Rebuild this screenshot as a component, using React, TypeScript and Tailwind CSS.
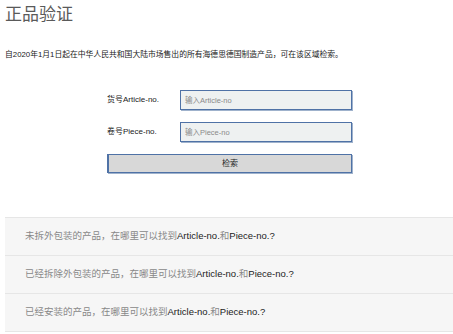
import React from "react";

const questions = [
  "未拆外包装的产品，在哪里可以找到",
  "已经拆除外包装的产品，在哪里可以找到",
  "已经安装的产品，在哪里可以找到",
];

export default function App() {
  return (
    <div
      className="w-[453px] h-[334px] overflow-hidden bg-white"
      style={{ fontFamily: '"Liberation Sans", "Noto Sans CJK SC", sans-serif' }}
    >
      {/* Header */}
      <div className="px-[5px] pt-[3px]">
        <h1 className="text-[17px] leading-[24px] text-[#5a5a5a] font-normal">正品验证</h1>
        <p className="mt-[22px] text-[7.8px] leading-[12px] text-[#222]">
          自2020年1月1日起在中华人民共和国大陆市场售出的所有海德思德国制造产品，可在该区域检索。
        </p>
      </div>

      {/* Search form */}
      <div className="ml-[107px] mt-[29px] w-[245px] flex flex-col">
        <div className="flex items-center h-[20px]">
          <label className="w-[73px] text-[8px] text-[#222]">货号Article-no.</label>
          <input
            type="text"
            placeholder="输入Article-no"
            className="w-[172px] h-[20px] px-[4px] text-[7.5px] bg-[#eef1f1] border border-[#4f72a6] shadow-[1px_1px_0_#9fb2cc] outline-none placeholder:text-[#8a8a8a]"
          />
        </div>
        <div className="flex items-center h-[20px] mt-[12px]">
          <label className="w-[73px] text-[8px] text-[#222]">卷号Piece-no.</label>
          <input
            type="text"
            placeholder="输入Piece-no"
            className="w-[172px] h-[20px] px-[4px] text-[7.5px] bg-[#eef1f1] border border-[#4f72a6] shadow-[1px_1px_0_#9fb2cc] outline-none placeholder:text-[#8a8a8a]"
          />
        </div>
        <button className="mt-[12px] h-[19px] w-[245px] bg-[#d8d8d8] border border-[#4f72a6] border-l-2 shadow-[1px_1px_0_#9fb2cc] text-[8px] text-[#222]">
          检索
        </button>
      </div>

      {/* FAQ */}
      <div className="ml-[5px] mt-[44px] border-t border-[#e6e6e6]">
        {questions.map((q) => (
          <div
            key={q}
            className="h-[38px] flex items-center pl-[20px] bg-[#f6f6f6] border-b border-[#e6e6e6] text-[9.5px] text-[#888]"
          >
            {q}
            <span className="text-[#222]">Article-no.</span>
            和
            <span className="text-[#222]">Piece-no.?</span>
          </div>
        ))}
      </div>
    </div>
  );
}
